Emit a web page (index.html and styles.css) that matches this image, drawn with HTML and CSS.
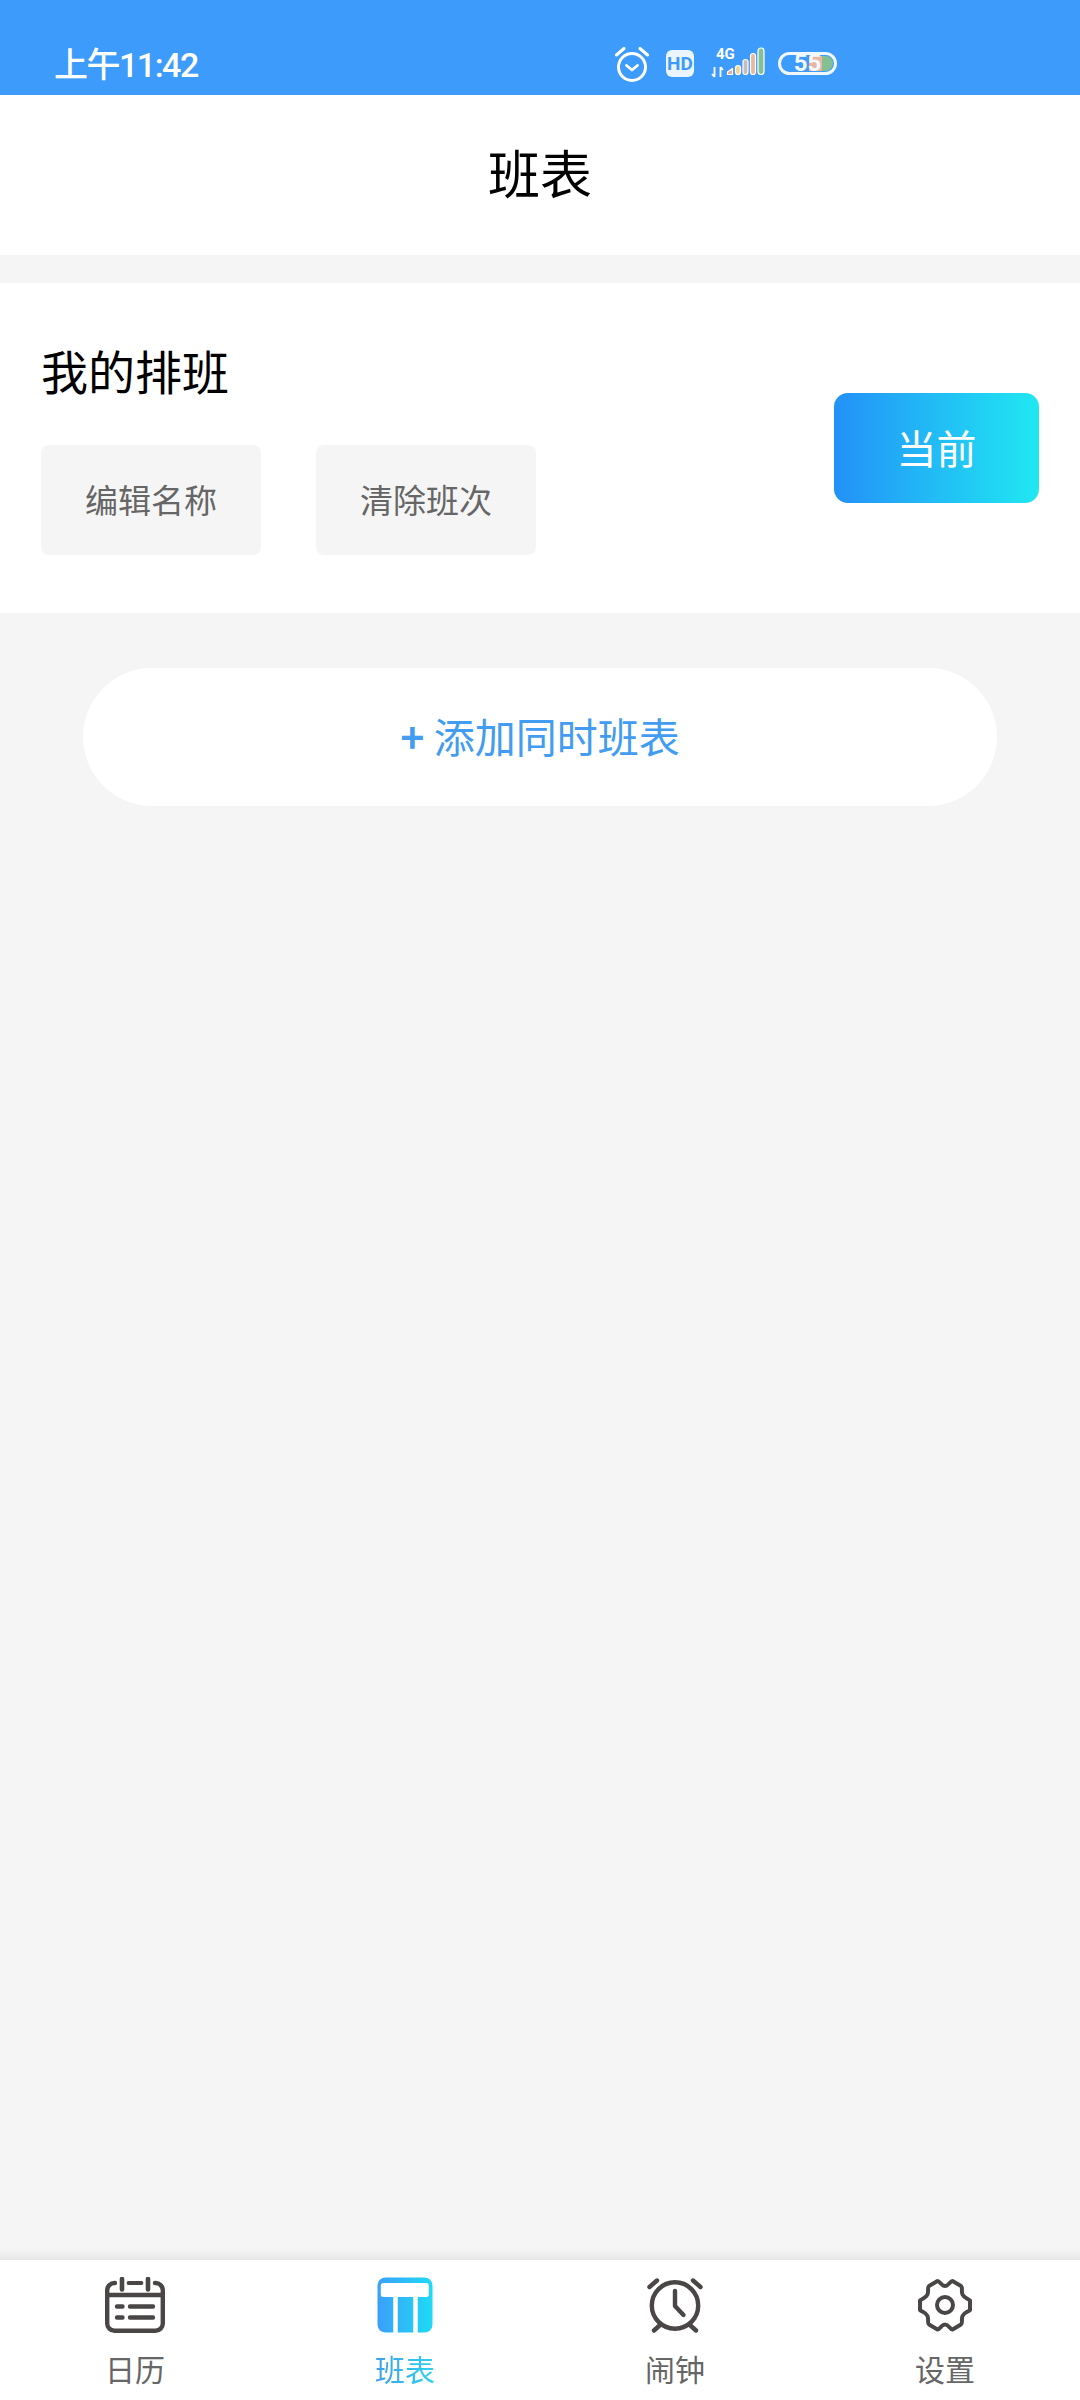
FILE: index.html
```html
<!DOCTYPE html>
<html lang="zh-CN">
<head>
    <meta charset="UTF-8">
    <meta name="viewport" content="width=device-width, initial-scale=1.0">
    <title>班表</title>
    <link rel="stylesheet" href="styles.css">
</head>
<body>
    <div class="app">
        <div class="status-bar">
            <span class="status-time">上午11:42</span>
            <div class="status-icons">
                <svg class="icon-alarm-small" width="34" height="35" viewBox="0 0 34 35">
                    <circle cx="17" cy="20" r="13.500" fill="none" stroke="#fff" stroke-width="3"/>
                    <path d="M11.500 18.500l5.500 4.500 5.500-4.500" fill="none" stroke="#fff" stroke-width="2.800" stroke-linecap="round" stroke-linejoin="round"/>
                    <path d="M1.500 8L9 1.500M32.500 8L25 1.500" fill="none" stroke="#fff" stroke-width="3" stroke-linecap="round"/>
                </svg>
                <div class="hd-badge">HD</div>
                <svg class="icon-signal" width="56" height="38" viewBox="0 -4 56 38">
                    <text x="5" y="12" class="signal-text">4G</text>
                    <path d="M3.500 20v10M3.500 30l-2.500-3M9.500 30V20M9.500 20l2.500 3" fill="none" stroke="#fff" stroke-width="1.800"/>
                    <path d="M16.500 27.500v-2.500l5-3.500v6z" fill="#f0a78f" stroke="#fff" stroke-width="1.200" stroke-linejoin="round"/>
                    <rect x="24.500" y="18.500" width="5" height="9" rx="2.500" fill="#f6d391" stroke="#fff" stroke-width="1.200"/>
                    <rect x="32" y="12.500" width="5" height="15" rx="2.500" fill="#c8bcbc" stroke="#fff" stroke-width="1.200"/>
                    <rect x="39.500" y="6.500" width="5" height="21" rx="2.500" fill="#e8b6a2" stroke="#fff" stroke-width="1.200"/>
                    <rect x="47" y="1" width="6" height="26.500" rx="3" fill="#84c094" stroke="#fff" stroke-width="1.200"/>
                </svg>
                <div class="battery">
                    <div class="battery-fill"></div>
                    <span class="battery-level">55</span>
                </div>
            </div>
        </div>

        <div class="page-title">班表</div>

        <div class="schedule-card">
            <div class="schedule-info">
                <div class="schedule-name">我的排班</div>
                <div class="schedule-actions">
                    <button class="action-btn">编辑名称</button>
                    <button class="action-btn">清除班次</button>
                </div>
            </div>
            <button class="current-btn">当前</button>
        </div>

        <div class="content">
            <button class="add-btn"><span class="add-plus">+</span> 添加同时班表</button>
        </div>

        <div class="tab-shadow"></div>
        <div class="tab-bar">
            <div class="tab-item">
                <svg width="60" height="56" viewBox="0 0 60 56">
                    <!-- frame, broken around the two posts -->
                    <path d="M10 6H9.500A7.300 7.300 0 0 0 2.200 13.300V46.500A7.300 7.300 0 0 0 9.500 53.800H50.500A7.300 7.300 0 0 0 57.800 46.500V13.300A7.300 7.300 0 0 0 50.500 6H50" fill="none" stroke="#4a4646" stroke-width="4.400" stroke-linecap="round"/>
                    <path d="M2 18h56" stroke="#4a4646" stroke-width="4.400"/>
                    <path d="M17 2v10.500M43 2v10.500" stroke="#4a4646" stroke-width="4.600" stroke-linecap="round"/>
                    <path d="M23.500 6h13" stroke="#4a4646" stroke-width="3.800" stroke-linecap="round"/>
                    <path d="M12 29.500h5.500M12 40.500h5.500M25 29.500h23M25 40.500h23" stroke="#4a4646" stroke-width="4.400" stroke-linecap="round"/>
                </svg>
                <span class="tab-label">日历</span>
            </div>
            <div class="tab-item">
                <svg width="56" height="56" viewBox="0 0 56 56">
                    <defs>
                        <linearGradient id="tabGrad" x1="0" y1="0" x2="1" y2="0">
                            <stop offset="0" stop-color="#3b9ffb"/>
                            <stop offset="1" stop-color="#1edbf5"/>
                        </linearGradient>
                    </defs>
                    <rect x="0.500" y="0.500" width="55" height="55" rx="8" fill="url(#tabGrad)"/>
                    <rect x="3.800" y="6" width="48" height="14" rx="2.500" fill="#fff"/>
                    <path d="M18.500 20v36M38.500 20v36" stroke="#fff" stroke-width="4.500"/>
                </svg>
                <span class="tab-label tab-label-active">班表</span>
            </div>
            <div class="tab-item">
                <svg width="56" height="56" viewBox="0 0 56 56">
                    <circle cx="28" cy="28.500" r="23.200" fill="none" stroke="#4a4646" stroke-width="4.400"/>
                    <path d="M28 14v15l8.500 9" fill="none" stroke="#4a4646" stroke-width="4.400" stroke-linecap="round" stroke-linejoin="round"/>
                    <path d="M2.500 10L10 3.500M53.500 10L46 3.500M7 53.500l5.500-5M49 53.500l-5.500-5" stroke="#4a4646" stroke-width="4.400" stroke-linecap="round"/>
                </svg>
                <span class="tab-label">闹钟</span>
            </div>
            <div class="tab-item">
                <svg width="56" height="56" viewBox="0 0 56 56">
                    <path d="M20.500 4C23 4 24 9 28 9S33 4 35.500 4L44 9C46 10.500 44 14 45.500 17.500C47 21 51 21.500 53 23.500V33C51 35 47 35.500 45.500 39C44 42.500 46 46 44 47.500L35.500 52.500C33 52.500 32 47.500 28 47.500S23 52.500 20.500 52.500L12 47.500C10 46 12 42.500 10.500 39C9 35.500 5 35 3 33V23.500C5 21.500 9 21 10.500 17.500C12 14 10 10.500 12 9Z" fill="none" stroke="#4a4646" stroke-width="4" stroke-linejoin="round"/>
                    <circle cx="28" cy="28" r="8" fill="none" stroke="#4a4646" stroke-width="4"/>
                </svg>
                <span class="tab-label">设置</span>
            </div>
        </div>
    </div>
</body>
</html>
```

FILE: styles.css
```css
* {
    box-sizing: border-box;
}

body {
    margin: 0;
    background-color: #f5f5f5;
    font-family: "Noto Sans CJK SC", "Noto Sans", sans-serif;
}

button {
    border: none;
    font-family: inherit;
    padding: 0;
}

.app {
    display: flex;
    flex-direction: column;
    width: 1080px;
    height: 2400px;
    overflow: hidden;
}

/* status bar */
.status-bar {
    flex: none;
    display: flex;
    align-items: flex-start;
    height: 95px;
    padding: 44px 0 0 54px;
    background: #3d9bfb;
    color: #fff;
}

.status-time {
    width: 561px;
    font-family: "Roboto", "Noto Sans CJK SC", sans-serif;
    font-size: 34px;
    font-weight: 500;
    letter-spacing: -1.5px;
    line-height: 42px;
}

.status-icons {
    display: flex;
    align-items: flex-start;
}

.icon-alarm-small {
    margin-top: 3px;
}

.hd-badge {
    width: 28px;
    height: 27px;
    margin: 6px 0 0 17px;
    border-radius: 6px;
    background: #ebf5ff;
    color: #3d9bfb;
    font-family: "Roboto", sans-serif;
    font-size: 19px;
    font-weight: 700;
    line-height: 27px;
    text-align: center;
}

.icon-signal {
    margin: -1px 0 0 17px;
}

.signal-text {
    fill: #fff;
    font-family: "Roboto", sans-serif;
    font-size: 15px;
    font-weight: 700;
}

.battery {
    position: relative;
    display: flex;
    justify-content: center;
    width: 59px;
    height: 23px;
    margin: 8px 0 0 11px;
    border: 3px solid #f0f7ff;
    border-radius: 12px;
}

.battery-fill {
    position: absolute;
    top: 1px;
    bottom: 1px;
    left: 28px;
    right: 1px;
    border-radius: 0 9px 9px 0;
    background: linear-gradient(90deg, #e8b6a2 0, #e8b6a2 55%, #84c094 55%);
}

.battery-level {
    position: relative;
    margin-top: -2px;
    color: #f4f9ff;
    font-family: "Roboto", sans-serif;
    font-size: 24px;
    font-weight: 700;
    line-height: 21px;
}

/* page header */
.page-title {
    flex: none;
    height: 160px;
    background: #fff;
    color: #000;
    font-size: 52px;
    line-height: 154px;
    text-align: center;
}

.schedule-card {
    flex: none;
    display: flex;
    justify-content: space-between;
    align-items: flex-start;
    height: 330px;
    margin-top: 28px;
    padding: 54px 41px 0;
    background: #fff;
}

.schedule-name {
    color: #000;
    font-size: 47px;
    line-height: 66px;
    margin-bottom: 42px;
}

.schedule-actions {
    display: flex;
    gap: 55px;
}

.action-btn {
    width: 220px;
    height: 110px;
    padding-bottom: 2px;
    border-radius: 8px;
    background: #f5f5f5;
    color: #666;
    font-size: 33px;
}

.current-btn {
    width: 205px;
    height: 110px;
    margin-top: 56px;
    padding-bottom: 2px;
    border-radius: 14px;
    background: linear-gradient(90deg, #2391f8, #20e8f2);
    color: #fff;
    font-size: 40px;
}

.content {
    flex: 1;
    padding: 55px 83px 0;
}

.add-btn {
    display: block;
    width: 100%;
    height: 138px;
    padding-bottom: 5px;
    border-radius: 69px;
    background: #fff;
    color: #429cf2;
    font-size: 41px;
}

.add-plus {
    font-weight: 700;
}

/* bottom tabs */
.tab-shadow {
    flex: none;
    height: 14px;
    background: linear-gradient(180deg, #f7f7f7, #e8e8e8);
}

.tab-bar {
    flex: none;
    display: grid;
    grid-template-columns: repeat(4, 1fr);
    height: 140px;
    background: #fff;
}

.tab-item {
    display: flex;
    flex-direction: column;
    align-items: center;
    padding-top: 17px;
}

.tab-label {
    margin-top: 15px;
    color: #666;
    font-size: 30px;
    line-height: 40px;
}

.tab-label-active {
    background: linear-gradient(90deg, #3b9ff0, #2fd2ee);
    -webkit-background-clip: text;
    background-clip: text;
    color: transparent;
}
```
